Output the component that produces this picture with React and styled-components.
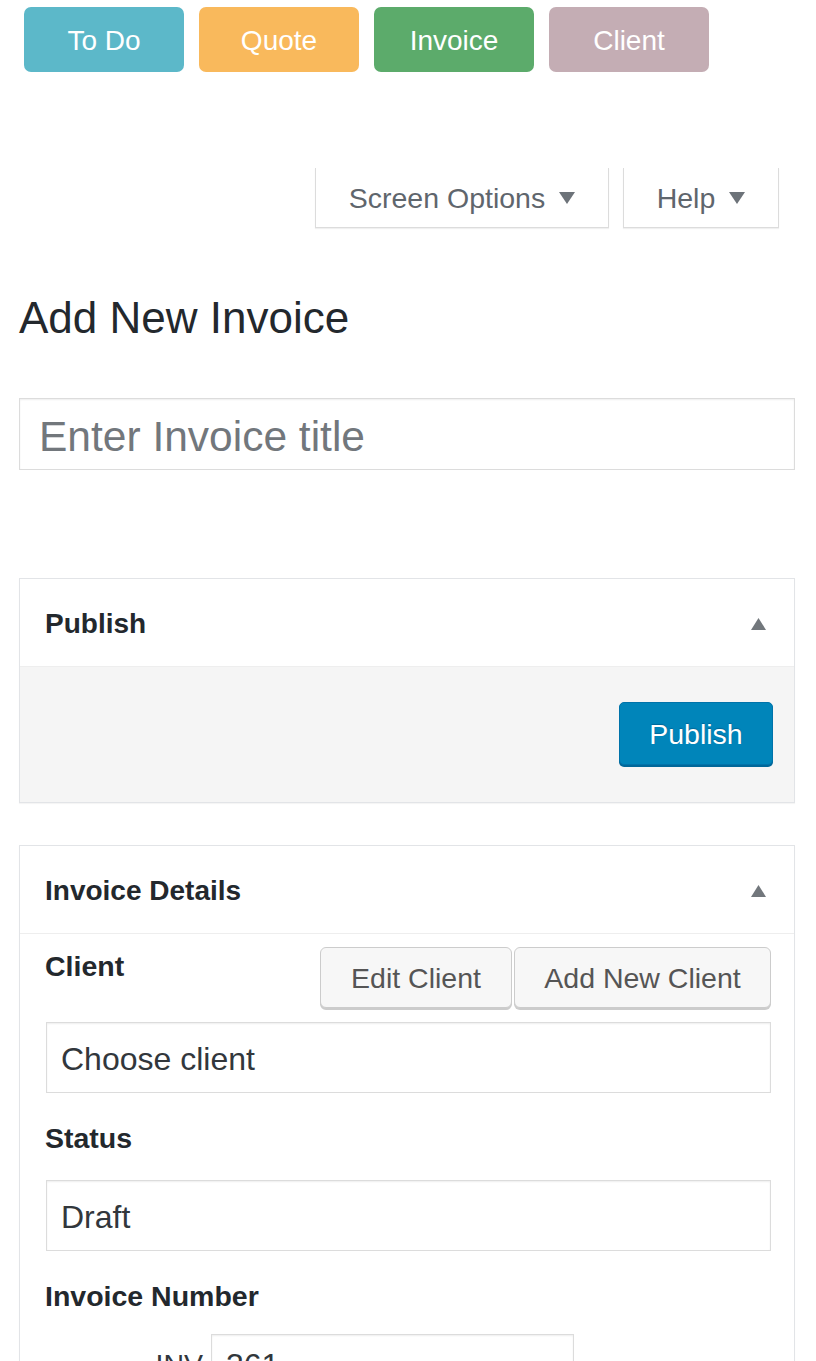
import React from 'react';
import styled, { createGlobalStyle } from 'styled-components';

const GlobalStyle = createGlobalStyle`
    body{
        margin: 0;
        background: #ffffff;
        font-family: "Liberation Sans", Arial, sans-serif;
        color: #23282d;
    }
    *{
        box-sizing: border-box;
    }
`;

const Page = styled.div`
    width: 816px;
    padding-bottom: 40px;
`;

const TypeBar = styled.div`
    display: flex;
    gap: 15px;
    padding: 7px 0 0 24px;
`;

const TypeButton = styled.button`
    width: 160px;
    height: 65px;
    padding-top: 4px;
    border: none;
    border-radius: 7px;
    background: ${({ $color }) => $color};
    color: #ffffff;
    font-family: inherit;
    font-size: 28px;
    cursor: pointer;
`;

const ScreenMeta = styled.div`
    display: flex;
    justify-content: flex-end;
    gap: 14px;
    margin: 96px 37px 0 0;
`;

const MetaTab = styled.button`
    width: ${({ $width }) => $width}px;
    height: 60px;
    display: flex;
    align-items: center;
    justify-content: center;
    gap: 14px;
    padding-top: 2px;
    background: #ffffff;
    border: 1px solid #dcdcdc;
    border-top: none;
    box-shadow: 0 1px 1px rgba(0, 0, 0, 0.06);
    color: #5f666d;
    font-family: inherit;
    font-size: 28.5px;
`;

const DownArrow = styled.svg`
    width: 16px;
    height: 12px;
    fill: #6d7379;
`;

const Wrap = styled.div`
    padding: 0 21px 0 19px;
`;

const Heading = styled.h1`
    margin: 62px 0 0;
    font-size: 44px;
    line-height: 56px;
    font-weight: 400;
    color: #23282d;
`;

const TitleInput = styled.input`
    display: block;
    width: 100%;
    height: 72px;
    margin-top: 52px;
    padding: 5px 19px 0;
    border: 1px solid #dcdcdc;
    box-shadow: inset 0 1px 2px rgba(0, 0, 0, 0.07);
    font-family: inherit;
    font-size: 42.5px;
    color: #32373c;
    outline: none;

    &::placeholder{
        color: #72777c;
    }
`;

const Postbox = styled.div`
    margin-top: ${({ $top }) => $top}px;
    border: 1px solid #e2e4e7;
    box-shadow: 0 1px 1px rgba(0, 0, 0, 0.04);
    background: #ffffff;
`;

const PostboxHeader = styled.div`
    height: 88px;
    display: flex;
    align-items: center;
    justify-content: space-between;
    padding: 2px 28px 0 25px;
    border-bottom: 1px solid #eeeeee;

    h2{
        margin: 0;
        font-size: 28px;
        font-weight: 700;
        color: #23282d;
    }
`;

const Toggle = styled.svg`
    width: 15px;
    height: 12px;
    fill: #72777c;
`;

const PublishActions = styled.div`
    display: flex;
    justify-content: flex-end;
    padding: 35px 21px 37px;
    background: #f5f5f5;
`;

const PrimaryButton = styled.button`
    width: 154px;
    height: 63px;
    padding-top: 3px;
    border: 1px solid #0073aa;
    border-radius: 5px;
    background: #0085ba;
    box-shadow: 0 2px 0 #006799;
    color: #ffffff;
    font-family: inherit;
    font-size: 28.5px;
    text-shadow: 0 -1px 1px #006799;
`;

const PostboxInside = styled.div`
    padding: 13px 23px 0 25px;
    min-height: 440px;
`;

const LabelRow = styled.div`
    display: flex;
    align-items: flex-start;
    justify-content: space-between;
`;

const FieldLabel = styled.div`
    margin-top: ${({ $top }) => $top || 0}px;
    font-size: 28.5px;
    line-height: 38px;
    font-weight: 700;
    color: #23282d;
`;

const ButtonGroup = styled.div`
    display: flex;
    gap: 2px;
`;

const SecondaryButton = styled.button`
    width: ${({ $width }) => $width}px;
    height: 61px;
    padding-top: 3px;
    border: 1px solid #cccccc;
    border-radius: 6px;
    background: #f7f7f7;
    box-shadow: 0 2px 0 #cccccc;
    color: #555555;
    font-family: inherit;
    font-size: 28.5px;
`;

const SelectBox = styled.div`
    height: 71px;
    margin: ${({ $top }) => $top}px 0 0 1px;
    display: flex;
    align-items: center;
    padding: 3px 14px 0;
    border: 1px solid #dcdcdc;
    box-shadow: inset 0 1px 2px rgba(0, 0, 0, 0.07);
    font-size: 32px;
    color: #32373c;
`;

const NumberRow = styled.div`
    display: flex;
    align-items: flex-start;
    gap: 8px;
    margin-top: 19px;
    padding-left: 76px;

    span{
        width: 82px;
        padding-top: 14px;
        text-align: right;
        font-size: 28.5px;
        color: #32373c;
    }
`;

const NumberInput = styled.div`
    width: 363px;
    height: 70px;
    padding: 12px 14px;
    border: 1px solid #dcdcdc;
    box-shadow: inset 0 1px 2px rgba(0, 0, 0, 0.07);
    font-size: 32px;
    color: #32373c;
`;

const types = [
    { label: 'To Do', color: '#5cb8c9' },
    { label: 'Quote', color: '#f9b95c' },
    { label: 'Invoice', color: '#5cab6b' },
    { label: 'Client', color: '#c4adb4' },
];

function Arrow() {
    return (
        <Toggle viewBox="0 0 15 12">
            <polygon points="7.5,0 15,12 0,12" />
        </Toggle>
    );
}

function Caret() {
    return (
        <DownArrow viewBox="0 0 16 12">
            <polygon points="0,0 16,0 8,12" />
        </DownArrow>
    );
}

export default function App() {
    return (
        <Page>
            <GlobalStyle />
            <TypeBar>
                {types.map((t) => (
                    <TypeButton key={t.label} $color={t.color}>{t.label}</TypeButton>
                ))}
            </TypeBar>

            <ScreenMeta>
                <MetaTab $width={294}>Screen Options <Caret /></MetaTab>
                <MetaTab $width={156}>Help <Caret /></MetaTab>
            </ScreenMeta>

            <Wrap>
                <Heading>Add New Invoice</Heading>
                <TitleInput placeholder="Enter Invoice title" />

                <Postbox $top={108}>
                    <PostboxHeader>
                        <h2>Publish</h2>
                        <Arrow />
                    </PostboxHeader>
                    <PublishActions>
                        <PrimaryButton>Publish</PrimaryButton>
                    </PublishActions>
                </Postbox>

                <Postbox $top={42}>
                    <PostboxHeader>
                        <h2>Invoice Details</h2>
                        <Arrow />
                    </PostboxHeader>
                    <PostboxInside>
                        <LabelRow>
                            <FieldLabel>Client</FieldLabel>
                            <ButtonGroup>
                                <SecondaryButton $width={192}>Edit Client</SecondaryButton>
                                <SecondaryButton $width={257}>Add New Client</SecondaryButton>
                            </ButtonGroup>
                        </LabelRow>
                        <SelectBox $top={14}>Choose client</SelectBox>

                        <FieldLabel $top={26}>Status</FieldLabel>
                        <SelectBox $top={23}>Draft</SelectBox>

                        <FieldLabel $top={26}>Invoice Number</FieldLabel>
                        <NumberRow>
                            <span>INV</span>
                            <NumberInput>361</NumberInput>
                        </NumberRow>
                    </PostboxInside>
                </Postbox>
            </Wrap>
        </Page>
    );
}
